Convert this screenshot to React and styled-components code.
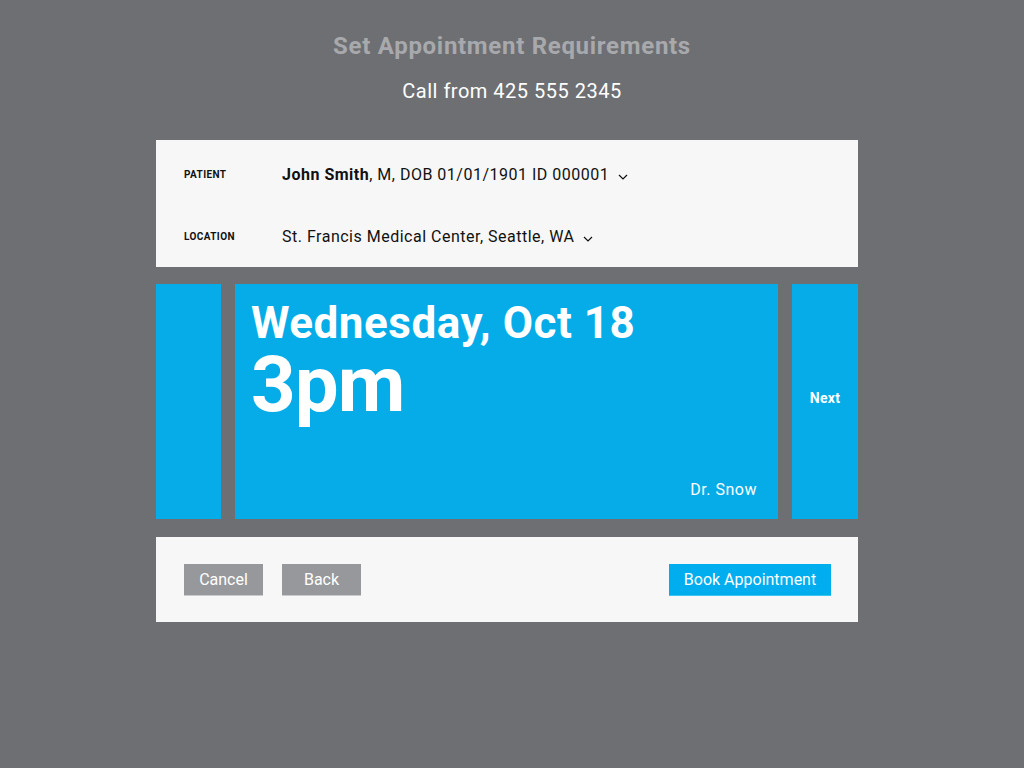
import React from 'react';
import styled, { createGlobalStyle } from 'styled-components';

const GlobalStyle = createGlobalStyle`
  html, body {
    margin: 0;
    padding: 0;
    background: #6e6f73;
    font-family: Roboto, "Noto Sans", sans-serif;
  }
`;

const Page = styled.div`
  width: 1024px;
  height: 768px;
  display: flex;
  flex-direction: column;
  align-items: center;
  padding-top: 31px;
  box-sizing: border-box;
`;

const Title = styled.h1`
  margin: 0;
  font-size: 24px;
  font-weight: 700;
  color: #a8a9ac;
  line-height: 30px;
  letter-spacing: 0.7px;
`;

const Subtitle = styled.div`
  margin-top: 17px;
  font-size: 20px;
  color: #ffffff;
  line-height: 26px;
  letter-spacing: 0.5px;
`;

const Panel = styled.section`
  width: 702px;
  margin-right: 10px;
  background: #f7f7f7;
  box-sizing: border-box;
`;

const InfoPanel = styled(Panel)`
  margin-top: 36px;
  height: 127px;
  padding: 22px 28px 0;
  display: flex;
  flex-direction: column;
  gap: 38px;
`;

const InfoRow = styled.div`
  display: flex;
  align-items: center;
  height: 24px;
`;

const Label = styled.span`
  width: 98px;
  font-size: 10px;
  font-weight: 700;
  color: #111;
  text-transform: uppercase;
  letter-spacing: 0.4px;
`;

const Value = styled.span`
  font-size: 16px;
  color: #111;
  letter-spacing: 0.5px;
  display: flex;
  align-items: center;
  gap: 9px;
  b {
    font-weight: 700;
  }
`;

const Chevron = () => (
  <svg width="10" height="6" viewBox="0 0 10 6" style={{ marginTop: 5 }}>
    <path d="M1 1l4 4 4-4" fill="none" stroke="#111" strokeWidth="1.2" />
  </svg>
);

const Slots = styled.div`
  margin-top: 17px;
  margin-right: 10px;
  width: 702px;
  height: 235px;
  display: flex;
  gap: 14px;
`;

const Slot = styled.div`
  background: #06ace8;
  width: ${(p) => p.$w}px;
  flex: ${(p) => (p.$grow ? 1 : 'none')};
  display: flex;
  color: #fff;
  box-sizing: border-box;
`;

const MainSlot = styled(Slot)`
  flex-direction: column;
  padding: 15px 21px 19px 16px;
`;

const Day = styled.div`
  font-size: 44px;
  font-weight: 700;
  line-height: 48px;
  letter-spacing: 0.5px;
`;

const Time = styled.div`
  font-size: 78px;
  font-weight: 700;
  line-height: 76px;
  letter-spacing: -1px;
`;

const Doctor = styled.div`
  margin-top: auto;
  align-self: flex-end;
  font-size: 16px;
  line-height: 20px;
  letter-spacing: 0.5px;
`;

const NextSlot = styled(Slot)`
  align-items: center;
  justify-content: center;
  padding-bottom: 8px;
  font-size: 14px;
  font-weight: 700;
  letter-spacing: 0.3px;
`;

const ActionPanel = styled(Panel)`
  margin-top: 18px;
  height: 85px;
  padding: 0 27px 0 28px;
  display: flex;
  align-items: center;
`;

const Button = styled.button`
  height: 32px;
  border: none;
  border-bottom: 1px solid ${(p) => (p.$primary ? '#3cc3f2' : '#c9cacc')};
  background: ${(p) => (p.$primary ? '#00adef' : '#97989c')};
  color: #fff;
  font-family: inherit;
  font-size: 16px;
  padding: 0;
  width: ${(p) => p.$w}px;
  margin-left: ${(p) => p.$ml || 0};
  cursor: pointer;
`;

export default function App() {
  return (
    <>
      <GlobalStyle />
      <Page>
        <Title>Set Appointment Requirements</Title>
        <Subtitle>Call from 425 555 2345</Subtitle>
        <InfoPanel>
          <InfoRow>
            <Label>Patient</Label>
            <Value>
              <span>
                <b>John Smith</b>, M, DOB 01/01/1901 ID 000001
              </span>
              <Chevron />
            </Value>
          </InfoRow>
          <InfoRow>
            <Label>Location</Label>
            <Value>
              <span>St. Francis Medical Center, Seattle, WA</span>
              <Chevron />
            </Value>
          </InfoRow>
        </InfoPanel>
        <Slots>
          <Slot $w={65} />
          <MainSlot $grow>
            <Day>Wednesday, Oct 18</Day>
            <Time>3pm</Time>
            <Doctor>Dr. Snow</Doctor>
          </MainSlot>
          <NextSlot $w={66}>Next</NextSlot>
        </Slots>
        <ActionPanel>
          <Button $w={79}>Cancel</Button>
          <Button $w={79} $ml="19px">Back</Button>
          <Button $w={162} $ml="auto" $primary>Book Appointment</Button>
        </ActionPanel>
      </Page>
    </>
  );
}
